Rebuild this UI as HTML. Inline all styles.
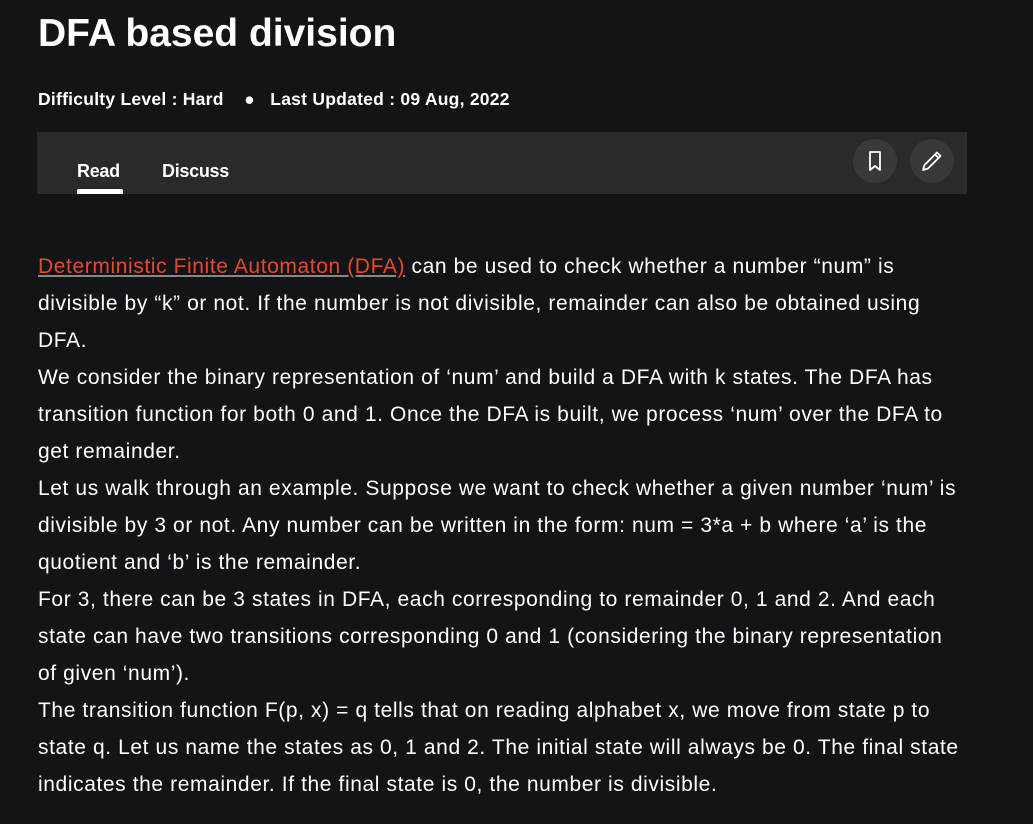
<!DOCTYPE html>
<html><head><meta charset="utf-8"><style>
body{margin:0;background:#131417;width:1033px;height:824px;overflow:hidden;font-family:"Liberation Sans",sans-serif;color:#fff}
h1{position:absolute;left:38px;top:12px;margin:0;font-size:39px;font-weight:bold;letter-spacing:0px}
.meta{position:absolute;left:38px;top:89px;font-size:17.5px;font-weight:bold;letter-spacing:0.25px}
.bar{position:absolute;left:37px;top:132px;width:930px;height:62px;background:#2a2a2a}
.tab{position:absolute;top:161px;font-size:18px;font-weight:bold;letter-spacing:-0.3px}
.ul{position:absolute;left:77px;top:189px;width:46px;height:5px;background:#fff;border-radius:2px 2px 0 0}
.c{position:absolute;top:139px;width:44px;height:44px;border-radius:50%;background:#393939}
.c svg{position:absolute;left:10px;top:10px}
.txt{position:absolute;left:38px;top:248px;font-size:21px;line-height:37px;white-space:nowrap;letter-spacing:0.6px}
a{color:#e8492a;text-decoration:underline;text-decoration-color:#888}
</style></head><body>
<h1>DFA based division</h1>
<div class="meta">Difficulty Level : Hard &nbsp;&nbsp; ● &nbsp; Last Updated : 09 Aug, 2022</div>
<div class="bar"></div>
<div class="tab" style="left:77px">Read</div>
<div class="tab" style="left:162px">Discuss</div>
<div class="ul"></div>
<div class="c" style="left:853px"><svg width="24" height="24" viewBox="0 0 24 24" fill="none" stroke="#fff" stroke-width="1.8" stroke-linejoin="round"><path d="M7 3h10v18l-5-4-5 4z"/></svg></div>
<div class="c" style="left:910px"><svg width="24" height="24" viewBox="0 0 24 24" fill="none" stroke="#fff" stroke-width="1.8" stroke-linejoin="round"><path d="M3 21l1.5-5L17 3.5l3.5 3.5L8 19.5zM15 5.5l3.5 3.5"/></svg></div>
<div class="txt"><a>Deterministic Finite Automaton (DFA)</a> can be used to check whether a number “num” is<br>divisible by “k” or not. If the number is not divisible, remainder can also be obtained using<br>DFA.<br>We consider the binary representation of ‘num’ and build a DFA with k states. The DFA has<br>transition function for both 0 and 1. Once the DFA is built, we process ‘num’ over the DFA to<br>get remainder.<br>Let us walk through an example. Suppose we want to check whether a given number ‘num’ is<br>divisible by 3 or not. Any number can be written in the form: num = 3*a + b where ‘a’ is the<br>quotient and ‘b’ is the remainder.<br>For 3, there can be 3 states in DFA, each corresponding to remainder 0, 1 and 2. And each<br>state can have two transitions corresponding 0 and 1 (considering the binary representation<br>of given ‘num’).<br>The transition function F(p, x) = q tells that on reading alphabet x, we move from state p to<br>state q. Let us name the states as 0, 1 and 2. The initial state will always be 0. The final state<br>indicates the remainder. If the final state is 0, the number is divisible.</div>
</body></html>
